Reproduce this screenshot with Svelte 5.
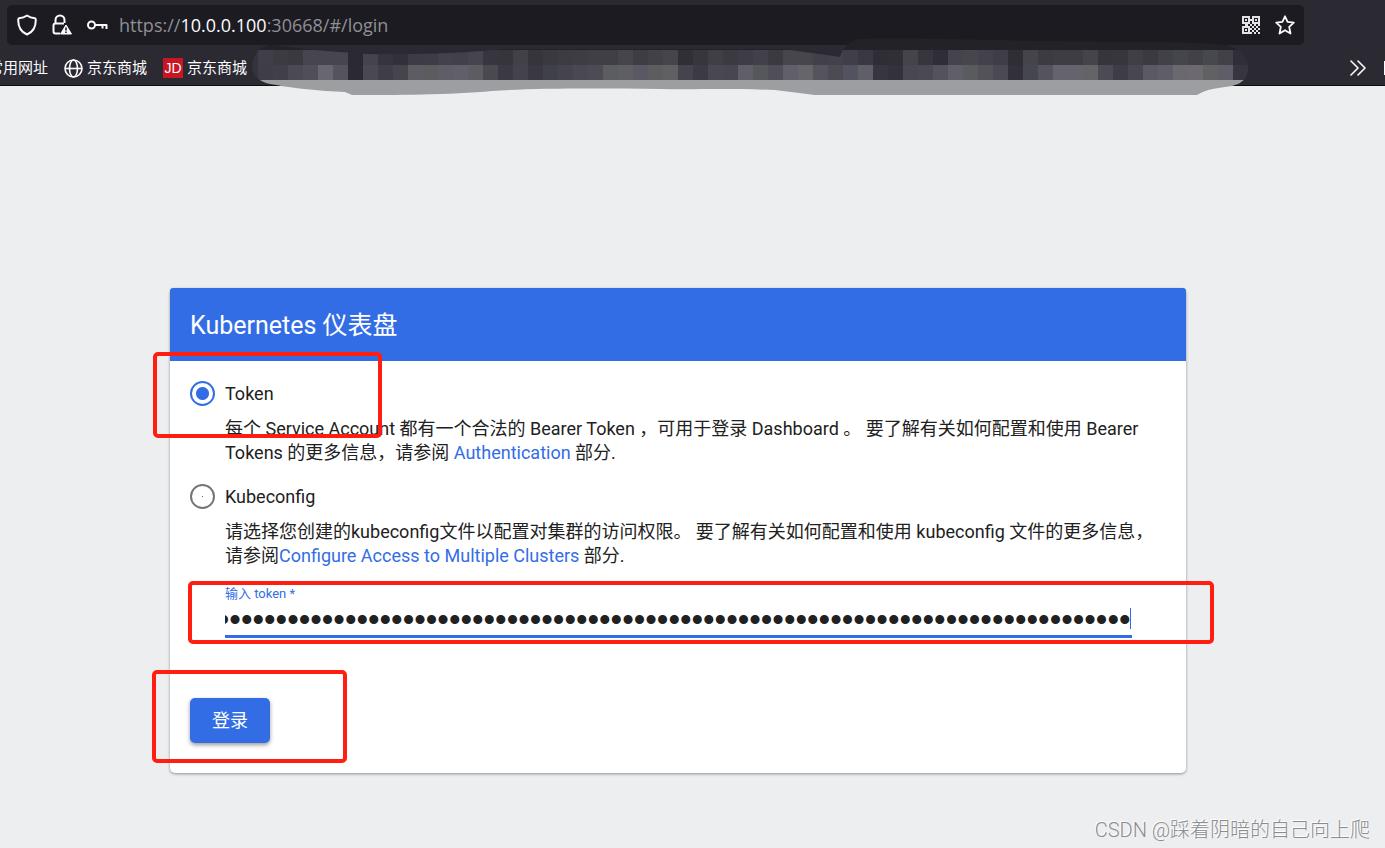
<script>
	const CELL = 15;

	// two rows of blurred-out bookmarks, one colour per cell
	const topRow =
		'403f49 3c3b44 3a3941 47464f 47464f 47464f 2b2a33 45444d 36353d 32313a 3d3c45 3c3d45 43424c 42414a 46454e 37363f 36353d 42414a 36353e 3a393f 3d3c45 3e3d46 403f48 403f48 46454d 3e3d46 42414a 46454c 302f38 37363f 403f48 3b3a43 3e3d47 42414b 3b3a43 47464e 47464d 42414a 43424b 403f48 3a3943 2f2e36 302f38 45444d 37363f 2f2e38 45444d 47464d 43424c 3f3e48 2f2e37 45444c 3c3b44 3e3d46 3e3d46 45444d 36353e 37363f 403f48 3b3a43 42414a 45464d 42414a 47474f 42414a 302f38';
	const bottomRow =
		'3f3e47 413f49 4b4a54 504f59 686671 55545e 2b2a33 4a4953 3f3e47 44454d 5d5c62 5b5c5e 5f5e66 615f69 5d5d61 4a4952 3b3a43 44434c 3a3943 40404a 45444d 4a4953 4d4c54 5c5d60 5f5e61 5a5963 5d5d60 606062 45444c 3c3b44 494852 484751 605f69 56575a 504f57 615f69 66656a 55545d 4c4b54 535260 605e69 37363f 33323a 484850 4b4a53 54535d 605e69 5a5b5d 53525a 4b4a53 32313a 45474f 55545e 65636d 65636d 646366 4c4b54 3e3d46 484751 5b5a64 5f5d68 6a696d 6c6a70 616063 5f5d68 37363f';
	const mosaic = [topRow, bottomRow].flatMap((row, y) =>
		row.split(' ').map((color, x) => ({ x: 6 + x * CELL, y: 12 + y * CELL, fill: '#' + color }))
	);

	let method = 'token';
	let token = 'x'.repeat(160);

	function showEnd(node) {
		node.scrollLeft = node.scrollWidth;
	}
</script>

<div class="window">
	<header class="browser">
		<div class="address">
			<svg width="20" height="22" viewBox="0 0 20 22" fill="none" stroke="#fbfbfe" stroke-width="2" stroke-linejoin="round">
				<path d="M10 1.5C7.5 3.3 4.8 4 2 4.3C1.3 4.5 1.2 5 1.2 6C1.2 13.5 4 18 10 20.5C16 18 18.8 13.5 18.8 6C18.8 5 18.7 4.5 18 4.3C15.2 4 12.5 3.3 10 1.5Z" />
			</svg>
			<svg width="20" height="22" viewBox="0 0 20 22" fill="none" stroke="#fbfbfe" stroke-width="2">
				<path d="M3.5 9V6A4.5 4.5 0 0 1 12.5 6V9M8 19.5H3.5Q1.5 19.5 1.5 17.5V11.5Q1.5 9.5 3.5 9.5H12" />
				<path d="M14 11L19.5 20H8.5Z" fill="#fbfbfe" stroke-width="1" stroke-linejoin="round" />
				<path d="M14 13.5V16.5M14 17.5V19" stroke="#1c1b22" stroke-width="1.6" />
			</svg>
			<svg width="21" height="14" viewBox="0 0 21 14" fill="none" stroke="#fbfbfe" stroke-width="2">
				<circle cx="4.5" cy="7" r="3.5" />
				<path d="M8 7H19.5V11M15.5 7V10.5" stroke-linejoin="round" />
			</svg>
			<span class="url">https://<b>10.0.0.100</b>:30668/#/login</span>
			<svg width="18" height="18" viewBox="0 0 18 18" fill="#e3e3e6">
				<path fill-rule="evenodd" d="M0 0H8V8H0ZM2 2V6H6V2ZM3 3H5V5H3ZM10 0H18V8H10ZM12 2V6H16V2ZM13 3H15V5H13ZM0 10H8V18H0ZM2 12V16H6V12ZM3 13H5V15H3Z" />
				<path d="M8 3H10V5H8ZM3 8H6V10H3ZM8 8H10V10H8ZM12 8H14V10H12ZM16 8H18V10H16ZM10 10H12V12H10ZM14 10H16V12H14ZM8 12H10V14H8ZM12 12H14V14H12ZM16 12H18V14H16ZM10 14H12V16H10ZM14 14H16V16H14ZM8 16H10V18H8ZM12 16H14V18H12ZM16 16H18V18H16Z" />
			</svg>
			<svg width="20" height="20" viewBox="0 0 20 20" fill="none" stroke="#fbfbfe" stroke-width="1.8" stroke-linejoin="round">
				<path d="M10 1.3L12.6 6.9L18.8 7.6L14.2 11.8L15.5 18.5L10 15.2L4.5 18.5L5.8 11.8L1.2 7.6L7.4 6.9Z" />
			</svg>
		</div>
		<nav class="bookmarks">
			<a href="#/bookmarks">常用网址</a>
			<a href="#/jd">
				<svg width="19" height="19" viewBox="0 0 19 19" fill="none" stroke="#fbfbfe" stroke-width="1.6">
					<circle cx="9.5" cy="9.5" r="8.5" />
					<ellipse cx="9.5" cy="9.5" rx="4" ry="8.5" />
					<path d="M1 9.5H18" />
				</svg>
				京东商城
			</a>
			<a href="#/jd-shop"><span class="jd">JD</span>京东商城</a>
			<button class="more" type="button" aria-label="More bookmarks">
				<svg width="16" height="16" viewBox="0 0 16 16" fill="none" stroke="#fbfbfe" stroke-width="1.6" stroke-linecap="round" stroke-linejoin="round">
					<path d="M1 1L8 8L1 15M8 1L15 8L8 15" />
				</svg>
			</button>
			<span class="edge"></span>
		</nav>
		<svg class="smudge" width="996" height="58" viewBox="0 0 996 58" aria-hidden="true">
			<clipPath id="blob">
				<path d="M0 29Q1 12 16 7H24C44 10 70 14 111 15V16Q180 17 231 13L250 11H531L588 19Q592 5 606 1C640 -1 700 1 748 2C830 5 930 2 975 7Q996 14 996 30Q996 44 980 48C965 50 955 51 945 57H563L523 52C470 50 440 52 410 51C340 50 280 50 240 53C200 57 140 57 100 57L93 54C70 53 35 50 14 45Q1 40 0 29Z" />
			</clipPath>
			<g clip-path="url(#blob)">
				<rect width="996" height="12" fill="#232227" />
				<rect y="12" width="996" height="30" fill="#35343d" />
				<rect y="42" width="996" height="16" fill="#9d9ea1" />
				{#each mosaic as cell}
					<rect x={cell.x} y={cell.y} width={CELL} height={CELL} fill={cell.fill} shape-rendering="crispEdges" />
				{/each}
			</g>
		</svg>
	</header>

	<main>
		<form class="card" on:submit|preventDefault>
			<h1>Kubernetes 仪表盘</h1>
			<div class="content">
				<label class="option">
					<input type="radio" name="method" value="token" bind:group={method} />
					Token
				</label>
				<p>
					每个 Service Account 都有一个合法的 Bearer Token ，可用于登录 Dashboard 。 要了解有关如何配置和使用 Bearer<br />
					Tokens 的更多信息，请参阅 <a href="#/authentication">Authentication</a> 部分.
				</p>
				<label class="option">
					<input type="radio" name="method" value="kubeconfig" bind:group={method} />
					Kubeconfig
				</label>
				<p>
					请选择您创建的kubeconfig文件以配置对集群的访问权限。 要了解有关如何配置和使用 kubeconfig 文件的更多信息，<br />
					请参阅<a href="#/clusters">Configure Access to Multiple Clusters</a> 部分.
				</p>
				<div class="field">
					<label for="token">输入 token *</label>
					<div class="line">
						<input id="token" type="password" autocomplete="off" bind:value={token} use:showEnd />
						<span class="caret"></span>
					</div>
				</div>
				<button class="login" type="submit">登录</button>
			</div>
			<span class="mark mark-method"></span>
			<span class="mark mark-token"></span>
			<span class="mark mark-login"></span>
		</form>
	</main>

	<footer>CSDN @踩着阴暗的自己向上爬</footer>
</div>

<style>
	:global(body) {
		margin: 0;
		background: #edeef0;
	}

	.window {
		display: flex;
		flex-direction: column;
		min-height: 100vh;
		overflow: hidden;
		color: #212121;
		font-family: Roboto, 'Noto Sans CJK SC', sans-serif;
	}

	.browser {
		position: relative;
		box-sizing: border-box;
		height: 86px;
		padding-top: 5px;
		border-bottom: 1px solid #0c0c0d;
		background: #2b2a33;
		color: #fbfbfe;
	}

	.address {
		display: flex;
		align-items: center;
		gap: 15px;
		height: 40px;
		margin: 0 81px 0 7px;
		padding: 0 9px 0 10px;
		border-radius: 5px;
		background: #1c1b22;
	}

	.url {
		flex: 1;
		margin-left: -4px;
		color: #8f8f94;
		font: 18px/24px 'Open Sans', sans-serif;
	}

	.url b {
		color: #fbfbfe;
		font-weight: 400;
	}

	.bookmarks {
		display: flex;
		align-items: center;
		gap: 16px;
		height: 40px;
		margin-left: -12px;
		padding-top: 3px;
	}

	.bookmarks a {
		display: flex;
		align-items: center;
		gap: 4px;
		color: inherit;
		font-size: 15px;
		line-height: 20px;
		text-decoration: none;
	}

	.jd {
		width: 20px;
		background: #c81623;
		font-family: 'Liberation Sans', sans-serif;
		font-size: 14px;
		text-align: center;
	}

	.more {
		display: flex;
		margin-left: auto;
		padding: 0;
		border: 0;
		background: none;
	}

	.edge {
		width: 1px;
		height: 14px;
		margin-left: 2px;
		background: #fbfbfe;
	}

	.smudge {
		position: absolute;
		top: 38px;
		left: 252px;
	}

	main {
		flex: 1;
		padding: 202px 199px 0 170px;
	}

	.card {
		position: relative;
		border-radius: 5px;
		background: #fff;
		box-shadow: 0 1px 3px rgb(0 0 0 / 40%);
	}

	h1 {
		margin: 0;
		padding: 2px 20px 0;
		border-radius: 3px 3px 0 0;
		background: #326de6;
		color: #fff;
		font-size: 25px;
		font-weight: 400;
		line-height: 71px;
	}

	.content {
		padding: 20px 20px 30px;
	}

	.option {
		display: flex;
		align-items: center;
		gap: 10px;
		height: 25px;
		font-size: 18px;
	}

	.option input {
		appearance: none;
		box-sizing: border-box;
		width: 25px;
		height: 25px;
		margin: 0;
		border: 2px solid #757575;
		border-radius: 50%;
		background: linear-gradient(#326de6, #326de6) center / 1px 1px no-repeat;
	}

	.option input:checked {
		border-color: #326de6;
		background: radial-gradient(circle, #326de6 6px, transparent 7px);
	}

	p {
		margin: 11px 0 19px 35px;
		font-size: 18px;
		line-height: 24px;
		white-space: nowrap;
	}

	p a {
		color: #326de6;
		text-decoration: none;
	}

	.field {
		margin: 0 34px 60px 35px;
	}

	.field label {
		display: block;
		color: #326de6;
		font-size: 13px;
		line-height: 14px;
	}

	.line {
		position: relative;
		border-bottom: 3px solid #326de6;
	}

	.line input {
		display: block;
		box-sizing: border-box;
		width: 100%;
		height: 34px;
		padding: 4px 1px 0 0;
		border: 0;
		outline: 0;
		background: none;
		color: #212121;
		font: 33px/30px 'Liberation Sans', sans-serif;
	}

	.caret {
		position: absolute;
		right: 1px;
		bottom: 6px;
		width: 1px;
		height: 21px;
		background: #326de6;
	}

	.login {
		display: block;
		width: 80px;
		height: 45px;
		padding: 0 0 3px;
		border: 0;
		border-radius: 5px;
		background: #326de6;
		box-shadow: 0 2px 4px rgb(0 0 0 / 40%);
		color: #fff;
		font: inherit;
		font-size: 18px;
	}

	.mark {
		position: absolute;
		box-sizing: border-box;
		border: 4px solid #ff1e10;
		border-radius: 5px;
		pointer-events: none;
	}

	.mark-method {
		top: 64px;
		left: -17px;
		width: 229px;
		height: 86px;
	}

	.mark-token {
		top: 293px;
		right: -28px;
		left: 18px;
		height: 63px;
	}

	.mark-login {
		top: 382px;
		left: -18px;
		width: 195px;
		height: 93px;
	}

	footer {
		padding: 0 15px 5px;
		color: #8b8c8e;
		font-size: 20px;
		font-weight: 300;
		line-height: 26px;
		text-align: right;
		text-shadow: -1px -1px #fff;
	}
</style>
